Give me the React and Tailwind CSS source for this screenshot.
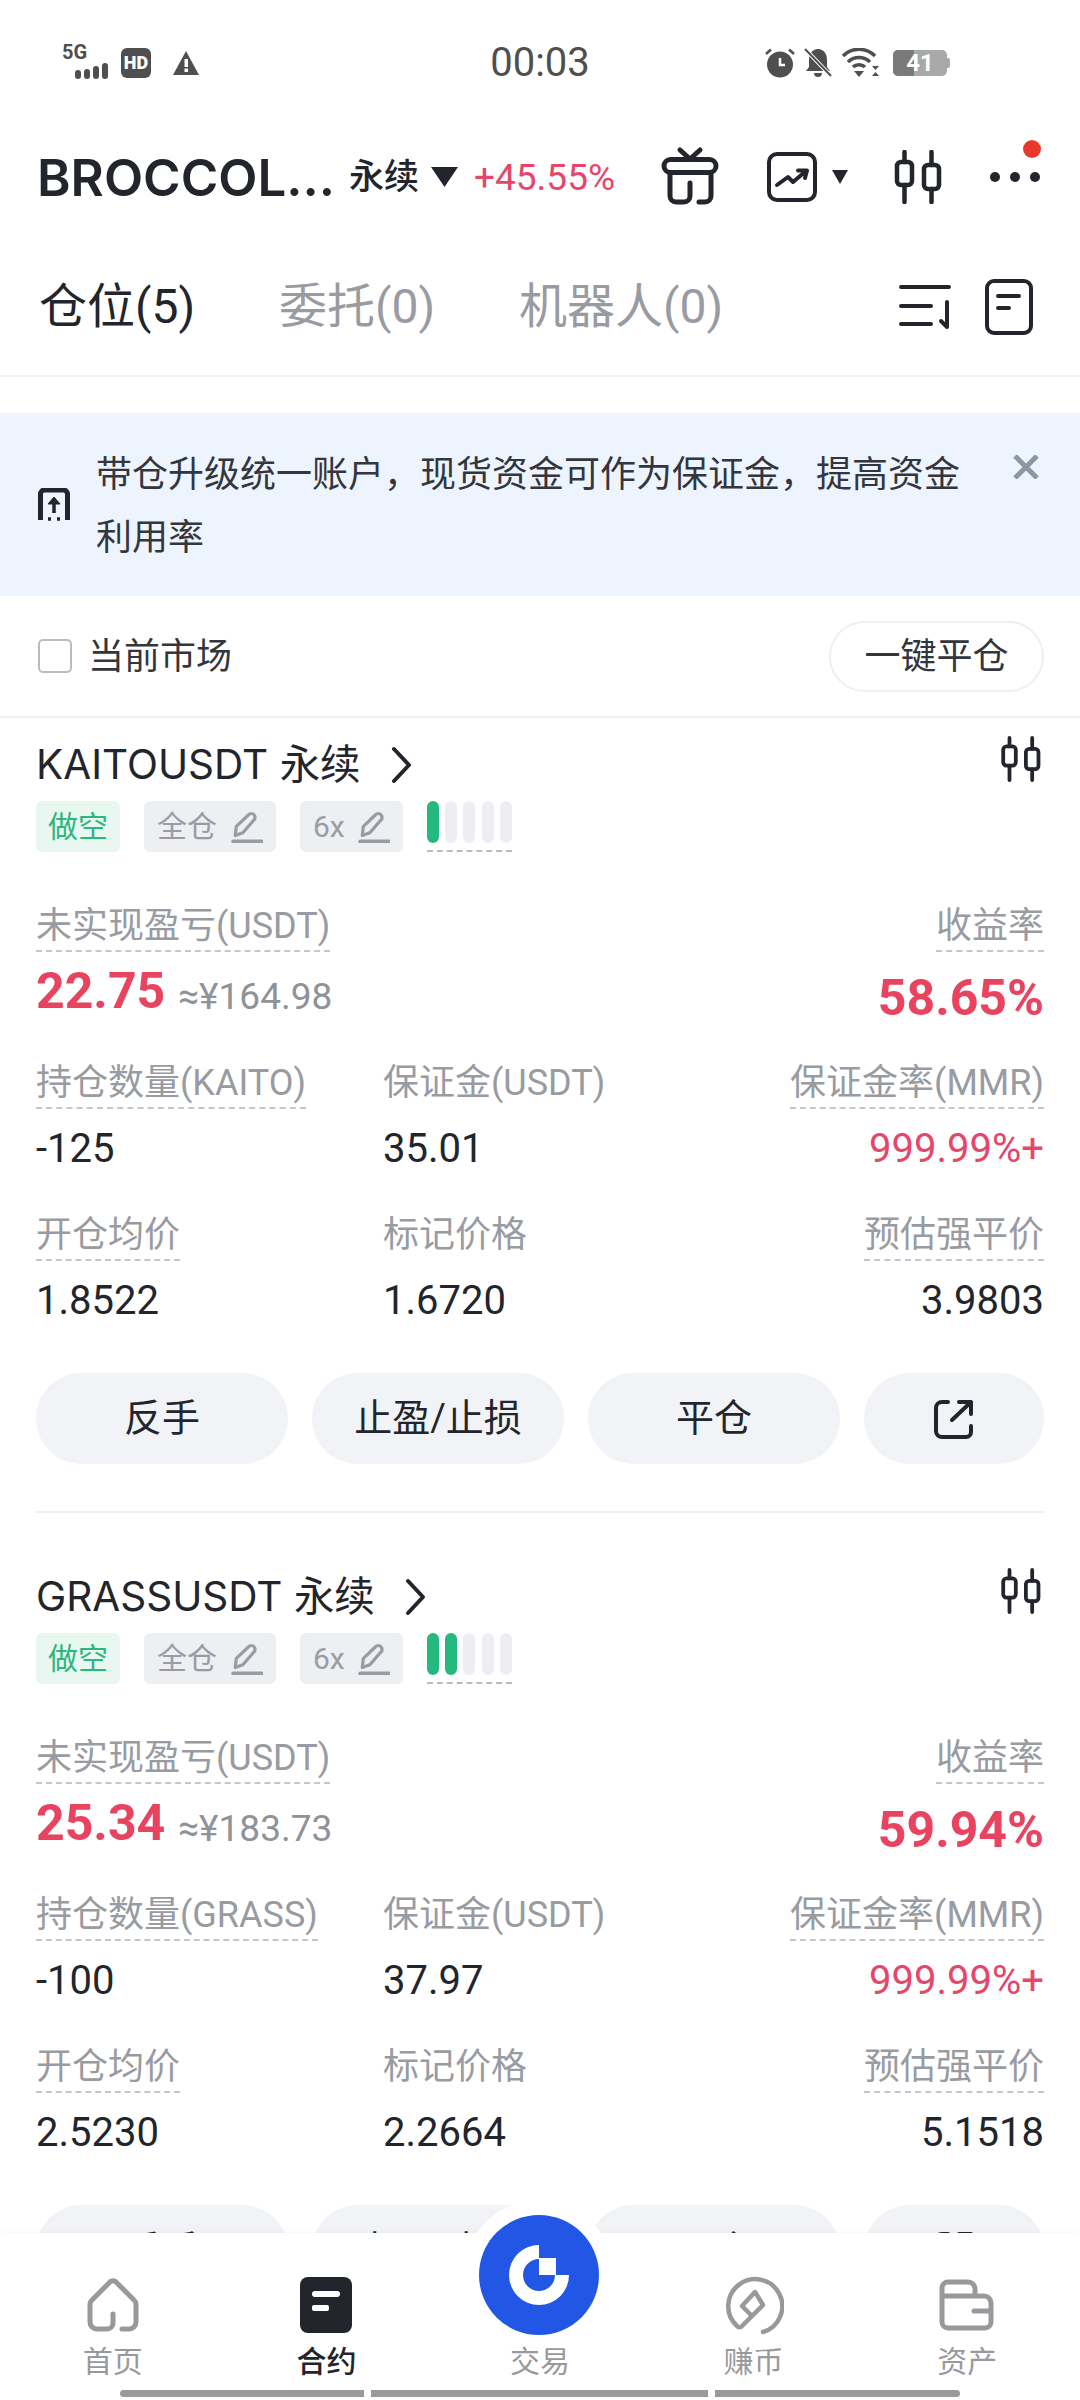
import React from 'react';

const positions = [
  {
    symbol: 'KAITOUSDT',
    coin: 'KAITO',
    pnl: '22.75',
    pnlCny: '≈¥164.98',
    roe: '58.65%',
    size: '-125',
    margin: '35.01',
    mmr: '999.99%+',
    entry: '1.8522',
    mark: '1.6720',
    liq: '3.9803',
    level: 1,
  },
  {
    symbol: 'GRASSUSDT',
    coin: 'GRASS',
    pnl: '25.34',
    pnlCny: '≈¥183.73',
    roe: '59.94%',
    size: '-100',
    margin: '37.97',
    mmr: '999.99%+',
    entry: '2.5230',
    mark: '2.2664',
    liq: '5.1518',
    level: 2,
  },
];

// Two candles, used in the header and on every position card
function CandleIcon({ className }) {
  return (
    <svg viewBox="0 0 50 54" className={className} fill="none" stroke="#23252d" strokeWidth="4.5" strokeLinecap="round">
      <rect x="5" y="12" width="15" height="23" rx="4" />
      <rect x="32" y="15" width="15" height="24" rx="4" />
      <path d="M12.5 2V12M12.5 35V52M39.5 2V15M39.5 39V52" />
    </svg>
  );
}

function PencilIcon() {
  return (
    <svg viewBox="0 0 30 30" className="w-[32px] h-[32px]" fill="none" stroke="#9a9ca3" strokeWidth="3" strokeLinecap="round" strokeLinejoin="round">
      <path d="M4 23L5 14.5L16.5 3.5a3.5 3.5 0 0 1 5 5L11 20.5Z" />
      <path d="M2 28.5H29" strokeWidth="3.5" />
    </svg>
  );
}

function StatusBar() {
  return (
    <div className="h-[125px] flex items-center relative text-[#4f4f4f]">
      <div className="flex items-center pl-[62px]">
        <div className="relative w-[50px] h-[32px]">
          <span className="absolute left-0 top-[-5px] text-[20px] leading-[20px] font-bold">5G</span>
          <div className="absolute left-[13px] bottom-0 flex items-end gap-[3px]">
            <div className="w-[6px] h-[9px] rounded-full bg-[#4f4f4f]" />
            <div className="w-[6px] h-[10px] rounded-full bg-[#4f4f4f]" />
            <div className="w-[6px] h-[13px] rounded-full bg-[#4f4f4f]" />
            <div className="w-[6px] h-[16px] rounded-full bg-[#4f4f4f]" />
          </div>
        </div>
        <div className="ml-[9px] w-[30px] h-[30px] rounded-[6px] bg-[#4f4f4f] flex items-center justify-center text-white text-[18px] font-black leading-none">
          HD
        </div>
        <svg viewBox="0 0 26 24" className="ml-[22px] w-[26px] h-[24px]">
          <path d="M13 0L26 24H0Z" fill="#4f4f4f" />
          <rect x="11.5" y="8" width="3.5" height="8" fill="#fff" />
          <rect x="11.5" y="17.5" width="3.5" height="3.5" fill="#fff" />
        </svg>
      </div>
      <div className="absolute left-0 right-0 text-center text-[40px] leading-none">00:03</div>
      <div className="ml-auto pr-[130px] flex items-center">
        <svg viewBox="0 0 30 30" className="w-[30px] h-[30px]">
          <circle cx="15" cy="16.5" r="13" fill="#4f4f4f" />
          <path d="M15 10V17H20" stroke="#fff" strokeWidth="2.5" fill="none" />
          <path d="M1 6L6 1.5M29 6L24 1.5" stroke="#4f4f4f" strokeWidth="2.5" />
        </svg>
        <svg viewBox="0 0 28 30" className="ml-[9px] w-[28px] h-[30px]">
          <path d="M14 1c6 0 9 5 9 11v7l3 4H2l3-4v-7C5 6 8 1 14 1ZM10 25h8a4 4 0 0 1-8 0Z" fill="#4f4f4f" />
          <path d="M1 1L27 28" stroke="#fff" strokeWidth="4" />
          <path d="M1 1L27 28" stroke="#4f4f4f" strokeWidth="2" />
        </svg>
        <svg viewBox="0 0 38 30" className="ml-[10px] w-[38px] h-[30px]">
          <path d="M1 8C10 -1 24 -1 33 8M6 14C12 8 22 8 28 14M11 19C14 16 20 16 23 19" fill="none" stroke="#4f4f4f" strokeWidth="3.5" />
          <path d="M12 23H22L17 29Z" fill="#4f4f4f" />
          <path d="M30 18H37L33.5 22ZM30 28H37L33.5 24Z" fill="#4f4f4f" />
        </svg>
        <div className="ml-[13px] flex items-center">
          <div className="relative w-[54px] h-[26px] rounded-[5px] overflow-hidden bg-[#a9a9a9] flex items-center justify-center text-white text-[24px] font-bold leading-none">
            <div className="absolute left-0 top-0 bottom-0 w-[21px] bg-[#7a7a7a]" />
            <span className="relative">41</span>
          </div>
          <div className="w-[3px] h-[10px] bg-[#a9a9a9] rounded-r-[2px]" />
        </div>
      </div>
    </div>
  );
}

function Header() {
  return (
    <div className="h-[104px] flex items-center pl-[37px] relative text-[#23252d]">
      <span className="w-[312px] text-[51px] font-semibold leading-none whitespace-nowrap [font-family:Inter,sans-serif]">BROCCOL...</span>
      <span className="text-[35px] leading-none font-medium">永续</span>
      <svg viewBox="0 0 27 20" className="ml-[12px] w-[27px] h-[20px]">
        <path d="M0 0H27L13.5 20Z" fill="#23252d" />
      </svg>
      <span className="ml-[16px] w-[142px] text-[37px] leading-none text-[#e5476b] whitespace-nowrap">+45.55%</span>
      <svg viewBox="0 0 62 62" className="ml-[43px] w-[62px] h-[62px]" fill="none" stroke="#23252d" strokeWidth="5" strokeLinecap="round">
        <rect x="5" y="13.5" width="52" height="13" rx="6.5" />
        <path d="M11 27V50a6 6 0 0 0 6 6h8a6 6 0 0 0 6-6V37M52 27V50a6 6 0 0 1-6 6h-6M21 4l10 9l10-9" />
      </svg>
      <svg viewBox="0 0 50 50" className="ml-[46px] w-[50px] h-[50px]" fill="none" stroke="#23252d" strokeWidth="4" strokeLinecap="round" strokeLinejoin="round">
        <rect x="2" y="2" width="46" height="46" rx="8" />
        <path d="M10 33L21 25L26 30L39 19M31 18.5H40L38 26" />
      </svg>
      <svg viewBox="0 0 16 14" className="ml-[15px] w-[16px] h-[14px]">
        <path d="M0 0H16L8 14Z" fill="#23252d" />
      </svg>
      <CandleIcon className="ml-[44px] w-[50px] h-[54px]" />
      <div className="ml-[48px] flex gap-[10px]">
        <div className="w-[10px] h-[10px] rounded-full bg-[#23252d]" />
        <div className="w-[10px] h-[10px] rounded-full bg-[#23252d]" />
        <div className="w-[10px] h-[10px] rounded-full bg-[#23252d]" />
      </div>
      <div className="absolute left-[1023px] top-[15px] w-[18px] h-[18px] rounded-full bg-[#e8392c]" />
    </div>
  );
}

function Tabs() {
  return (
    <div className="h-[148px] pt-[9px] flex items-center pl-[39px] pr-[47px] border-b-2 border-[#f1f2f4] text-[48px] leading-none text-[#989ba1]">
      <span className="text-[#23252d] w-[240px]">仓位(5)</span>
      <span className="w-[240px]">委托(0)</span>
      <span>机器人(0)</span>
      <svg viewBox="0 0 52 46" className="ml-auto w-[52px] h-[46px]" fill="none" stroke="#23252d" strokeWidth="4" strokeLinecap="round" strokeLinejoin="round">
        <path d="M2 3H50M2 22H32M2 40H32M48 18V43L42 37" />
      </svg>
      <svg viewBox="0 0 48 56" className="ml-[34px] w-[48px] h-[56px]" fill="none" stroke="#23252d" strokeWidth="4" strokeLinecap="round">
        <rect x="2" y="2" width="44" height="52" rx="7" />
        <path d="M13 17H34M13 29H24" />
      </svg>
    </div>
  );
}

function Banner() {
  return (
    <div className="mt-[36px] h-[183px] bg-[#edf4fe] flex items-center pl-[38px]">
      <svg viewBox="0 0 32 34" className="w-[32px] h-[34px] shrink-0" fill="none" stroke="#23252d" strokeWidth="5">
        <path d="M2.5 30V6a4 4 0 0 1 4-4H25.5a4 4 0 0 1 4 4V30" />
        <path d="M2.5 29V32M29.5 29V32" />
        <path d="M16 25V13" strokeWidth="3.5" />
        <path d="M10 16L16 9L22 16Z" fill="#23252d" strokeWidth="1" />
        <path d="M10 31H13M19 31H22" strokeWidth="3.5" />
      </svg>
      <p className="ml-[26px] pt-[5px] w-[870px] text-[36px] leading-[63px] text-[#33363d]">
        带仓升级统一账户，现货资金可作为保证金，提高资金利用率
      </p>
      <svg viewBox="0 0 28 24" className="self-start mt-[42px] ml-[46px] w-[28px] h-[24px]" fill="none" stroke="#8d96a3" strokeWidth="5">
        <path d="M3 1L25 23M25 1L3 23" />
      </svg>
    </div>
  );
}

function Toolbar() {
  return (
    <div className="h-[122px] flex items-center pl-[38px] pr-[36px] border-b-2 border-[#f1f2f4]">
      <div className="w-[34px] h-[34px] rounded-[5px] border-2 border-[#b9bbbf]" />
      <span className="ml-[16px] pt-[2px] text-[36px] leading-none text-[#33363d]">当前市场</span>
      <div className="ml-auto w-[215px] h-[71px] rounded-full border-2 border-[#eeeff1] flex items-center justify-center pt-[2px] text-[36px] leading-none text-[#33363d]">
        一键平仓
      </div>
    </div>
  );
}

function DashedLabel({ children }) {
  return (
    <span className="inline-block h-[50px] leading-[48px] text-[36px] text-[#989ba1] whitespace-nowrap border-b-2 border-dashed border-[#c4c6cb]">
      {children}
    </span>
  );
}

function PlainLabel({ children }) {
  return <span className="inline-block h-[50px] leading-[48px] text-[36px] text-[#989ba1] whitespace-nowrap">{children}</span>;
}

function Tag({ children, green }) {
  return (
    <div className={`h-[51px] rounded-[6px] flex items-center text-[30px] leading-none ${green ? 'bg-[#e8f8f0] text-[#2fb57f] px-[12px]' : 'bg-[#eeeff3] text-[#9a9ca3] pl-[13px] pr-[13px]'}`}>
      {children}
    </div>
  );
}

function Metric({ label, value, dashed, align, red }) {
  const Label = dashed ? DashedLabel : PlainLabel;
  return (
    <div className={align === 'right' ? 'text-right' : ''}>
      <Label>{label}</Label>
      <div className={`mt-[15px] h-[50px] leading-[50px] text-[40px] ${red ? 'text-[#e5476b]' : 'text-[#23252d]'}`}>{value}</div>
    </div>
  );
}

function PositionCard({ position, last }) {
  return (
    <div className="pt-[11px] px-[36px]">
      <div className="h-[72px] flex items-center">
        <span className="text-[40.5px] leading-none text-[#23252d] [font-family:Inter,'Noto_Sans_CJK_SC',sans-serif]">{position.symbol} 永续</span>
        <svg viewBox="0 0 22 40" className="ml-[30px] w-[22px] h-[40px]" fill="none" stroke="#23252d" strokeWidth="4" strokeLinecap="round" strokeLinejoin="round">
          <path d="M3 4L18 20L3 36" />
        </svg>
        <CandleIcon className="ml-auto mr-[3px] mb-[12px] w-[42px] h-[46px]" />
      </div>
      <div className="flex items-start">
        <Tag green>做空</Tag>
        <div className="ml-[24px]">
          <Tag>
            全仓
            <span className="ml-[14px]"><PencilIcon /></span>
          </Tag>
        </div>
        <div className="ml-[24px]">
          <Tag>
            6x
            <span className="ml-[13px]"><PencilIcon /></span>
          </Tag>
        </div>
        <div className="ml-[24px] w-[85px] h-[51px] border-b-2 border-dashed border-[#b9bbbf] flex justify-between items-start">
          {[0, 1, 2, 3, 4].map((i) => (
            <div key={i} className={`w-[12px] h-[42px] rounded-full ${i < position.level ? 'bg-[#25b87f]' : 'bg-[#eceef1]'}`} />
          ))}
        </div>
      </div>

      <div className="mt-[50px] flex justify-between items-start">
        <div>
          <DashedLabel>未实现盈亏(USDT)</DashedLabel>
          <div className="mt-[9px] h-[60px] flex items-center">
            <span className="text-[50px] font-bold leading-none text-[#e8445f]">{position.pnl}</span>
            <span className="ml-[13px] mt-[10px] text-[37px] leading-none text-[#8f9299]">{position.pnlCny}</span>
          </div>
        </div>
        <div className="text-right">
          <DashedLabel>收益率</DashedLabel>
          <div className="mt-[9px] h-[60px] pt-[7px] text-[50px] font-bold leading-[60px] text-[#e8445f]">{position.roe}</div>
        </div>
      </div>

      <div className="mt-[38px] grid grid-cols-[347px_1fr_auto] gap-y-[37px]">
        <Metric dashed label={`持仓数量(${position.coin})`} value={position.size} />
        <Metric label="保证金(USDT)" value={position.margin} />
        <Metric dashed align="right" label="保证金率(MMR)" value={position.mmr} red />
        <Metric dashed label="开仓均价" value={position.entry} />
        <Metric label="标记价格" value={position.mark} />
        <Metric dashed align="right" label="预估强平价" value={position.liq} />
      </div>

      <div className="mt-[47px] flex gap-[24px] text-[38px] text-[#23252d]">
        <div className="w-[252px] h-[91px] rounded-full bg-[#f1f3f6] flex items-center justify-center">反手</div>
        <div className="w-[252px] h-[91px] rounded-full bg-[#f1f3f6] flex items-center justify-center">止盈/止损</div>
        <div className="w-[252px] h-[91px] rounded-full bg-[#f1f3f6] flex items-center justify-center">平仓</div>
        <div className="w-[180px] h-[91px] rounded-full bg-[#f1f3f6] flex items-center justify-center">
          <svg viewBox="0 0 40 40" className="w-[40px] h-[40px]" fill="none" stroke="#23252d" strokeWidth="4" strokeLinecap="round" strokeLinejoin="round">
            <path d="M14 3H8a6 6 0 0 0-6 6V32a6 6 0 0 0 6 6H32a5 5 0 0 0 5-5V27" />
            <path d="M18 21L37 3M25 3H37V15" />
          </svg>
        </div>
      </div>
      {!last && <div className="mt-[47px] mb-[37px] h-[2px] bg-[#eef0f2]" />}
    </div>
  );
}

function NavItem({ label, active, children }) {
  return (
    <div className="flex flex-col items-center">
      <div className="h-[56px] flex items-center justify-center">{children}</div>
      <span className={`mt-[9px] h-[40px] leading-[40px] text-[30px] ${active ? 'text-[#23252d] font-medium' : 'text-[#98999c]'}`}>{label}</span>
    </div>
  );
}

function BottomNav() {
  return (
    <div className="absolute left-0 right-0 bottom-0 h-[167px] bg-white shadow-[0_-2px_8px_rgba(0,0,0,0.03)]">
      <div className="absolute left-[464px] top-[-33px] w-[150px] h-[150px] rounded-full bg-white" />
      <div className="relative pt-[44px] px-[6px] grid grid-cols-5">
        <NavItem label="首页">
          <svg viewBox="0 0 56 56" className="w-[56px] h-[56px]" fill="none" stroke="#98999c" strokeWidth="5" strokeLinecap="round" strokeLinejoin="round">
            <path d="M28 37V46a6 6 0 0 1-6 6H12a7 7 0 0 1-7-7V27a6 6 0 0 1 2-4L25 5a4 4 0 0 1 6 0L49 23a6 6 0 0 1 2 4V45a7 7 0 0 1-7 7H37" />
          </svg>
        </NavItem>
        <NavItem label="合约" active>
          <svg viewBox="0 0 52 56" className="w-[52px] h-[56px]">
            <rect width="52" height="56" rx="8" fill="#23252d" />
            <rect x="12" y="14" width="28" height="6" rx="3" fill="#fff" />
            <rect x="12" y="28" width="17" height="6" rx="2" fill="#fff" />
          </svg>
        </NavItem>
        <NavItem label="交易">
          <div className="w-[56px] h-[56px]" />
        </NavItem>
        <NavItem label="赚币">
          <svg viewBox="0 0 60 60" className="w-[60px] h-[60px]" fill="none" stroke="#98999c" strokeWidth="4.5" strokeLinecap="round" strokeLinejoin="round">
            <path d="M39 57A27 27 0 1 0 13 51a3 3 0 0 0 5 0L39 30L31 17L18 31L28 41" />
          </svg>
        </NavItem>
        <NavItem label="资产">
          <svg viewBox="0 0 56 52" className="w-[56px] h-[52px]" fill="none" stroke="#98999c" strokeWidth="5" strokeLinecap="round" strokeLinejoin="round">
            <path d="M3 17H45a7 7 0 0 1 7 7V32H35H52V43a6 6 0 0 1-6 6H9a6 6 0 0 1-6-6V9a6 6 0 0 1 6-6H29a7 7 0 0 1 7 7V17" />
          </svg>
        </NavItem>
      </div>
      <svg viewBox="0 0 120 120" className="absolute left-[479px] top-[-18px] w-[120px] h-[120px]">
        <circle cx="60" cy="60" r="60" fill="#2257e6" />
        <path d="M60 30A30 30 0 1 0 90 60H76A16 16 0 1 1 60 44Z" fill="#fff" />
        <rect x="60" y="43" width="17" height="17" fill="#fff" />
      </svg>
      <div className="mt-[8px] ml-[120px] flex gap-[7px]">
        <div className="w-[244px] h-[7px] rounded-l-full bg-[#9a9a9a]" />
        <div className="w-[337px] h-[7px] bg-[#9a9a9a]" />
        <div className="w-[245px] h-[7px] rounded-r-full bg-[#9a9a9a]" />
      </div>
    </div>
  );
}

export default function App() {
  return (
    <div className="relative w-[1080px] h-[2400px] overflow-hidden bg-white [font-family:Roboto,'Noto_Sans_CJK_SC',sans-serif]">
      <StatusBar />
      <Header />
      <Tabs />
      <Banner />
      <Toolbar />
      {positions.map((position, i) => (
        <PositionCard key={position.symbol} position={position} last={i === positions.length - 1} />
      ))}
      <BottomNav />
    </div>
  );
}
